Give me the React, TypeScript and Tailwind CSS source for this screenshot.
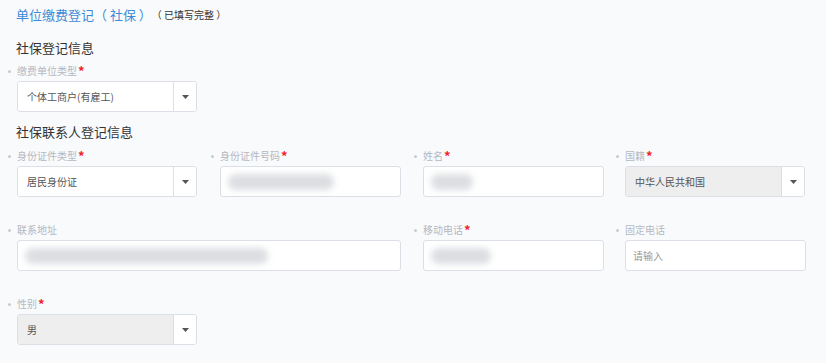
import React from 'react';

const Caret = () => (
  <svg width="7" height="4" viewBox="0 0 7 4" className="text-[#555]">
    <path d="M0 0h7L3.5 4z" fill="currentColor" />
  </svg>
);

const Label = ({ text, required }: { text: string; required?: boolean }) => (
  <div className="relative flex items-center h-4 text-[10px] leading-4 text-[#b5b8bf]">
    <span className="absolute -left-[9px] top-[7px] w-[3px] h-[3px] rounded-full bg-[#c8cbd0]" />
    {text}
    {required && <span className="ml-[1px] text-[13px] leading-4 font-bold text-[#f5222d]">*</span>}
  </div>
);

const Select = ({ value, disabled }: { value: string; disabled?: boolean }) => (
  <div className="flex h-[31px] w-[180px] rounded-[3px] border border-[#dcdfe6] overflow-hidden">
    <div className={`flex-1 flex items-center pl-[9px] text-[10px] text-[#555] ${disabled ? 'bg-[#eeeeee]' : 'bg-white'}`}>
      {value}
    </div>
    <div className="w-[23px] flex items-center justify-center bg-white border-l border-[#dcdfe6]">
      <Caret />
    </div>
  </div>
);

const Blur = ({ w }: { w: number }) => (
  <div className="flex items-center">
    <div className="h-[16px] rounded-full bg-[#dcdee2] blur-[3px]" style={{ width: w }} />
  </div>
);

const Input = ({ width = 181, blur, placeholder }: { width?: number; blur?: number; placeholder?: string }) => (
  <div
    className="flex items-center h-[31px] rounded-[3px] border border-[#dcdfe6] bg-white pl-[7px] text-[10px] text-[#999]"
    style={{ width }}
  >
    {blur ? <Blur w={blur} /> : placeholder}
  </div>
);

const Field = ({ children, className = '' }: { children: React.ReactNode; className?: string }) => (
  <div className={`pl-[9px] ${className}`}>{children}</div>
);

export default function App() {
  return (
    <div
      className="w-[826px] h-[363px] bg-[#f9fafc] pl-2 overflow-hidden"
      style={{ fontFamily: '"Noto Sans CJK SC", "Noto Sans", sans-serif' }}
    >
      <div className="pl-2 pt-[5px] flex items-end h-[25px] leading-5">
        <span className="text-[13px] text-[#3d8ad6] whitespace-pre">单位缴费登记（ 社保 ）</span>
        <span className="text-[10px] text-[#333] leading-5 whitespace-pre">（ 已填写完整 ）</span>
      </div>
      <div className="pl-2 mt-[13px] text-[13px] leading-5 text-[#333]">社保登记信息</div>
      <Field className="mt-[5px]">
        <Label text="缴费单位类型" required />
        <div className="mt-[2px]">
          <Select value="个体工商户(有雇工)" />
        </div>
      </Field>
      <div className="pl-2 mt-[10px] text-[13px] leading-5 text-[#333]">社保联系人登记信息</div>
      <div className="mt-[6px] grid grid-cols-[203px_203px_202px_203px] gap-y-[25px]">
        <Field>
          <Label text="身份证件类型" required />
          <div className="mt-[2px]"><Select value="居民身份证" /></div>
        </Field>
        <Field>
          <Label text="身份证件号码" required />
          <div className="mt-[2px]"><Input blur={106} /></div>
        </Field>
        <Field>
          <Label text="姓名" required />
          <div className="mt-[2px]"><Input blur={42} /></div>
        </Field>
        <Field>
          <Label text="国籍" required />
          <div className="mt-[2px]"><Select value="中华人民共和国" disabled /></div>
        </Field>

        <Field className="col-span-2">
          <Label text="联系地址" />
          <div className="mt-[2px]"><Input width={384} blur={243} /></div>
        </Field>
        <Field>
          <Label text="移动电话" required />
          <div className="mt-[2px]"><Input blur={60} /></div>
        </Field>
        <Field>
          <Label text="固定电话" />
          <div className="mt-[2px]"><Input placeholder="请输入" /></div>
        </Field>

        <Field>
          <Label text="性别" required />
          <div className="mt-[2px]"><Select value="男" disabled /></div>
        </Field>
      </div>
    </div>
  );
}
